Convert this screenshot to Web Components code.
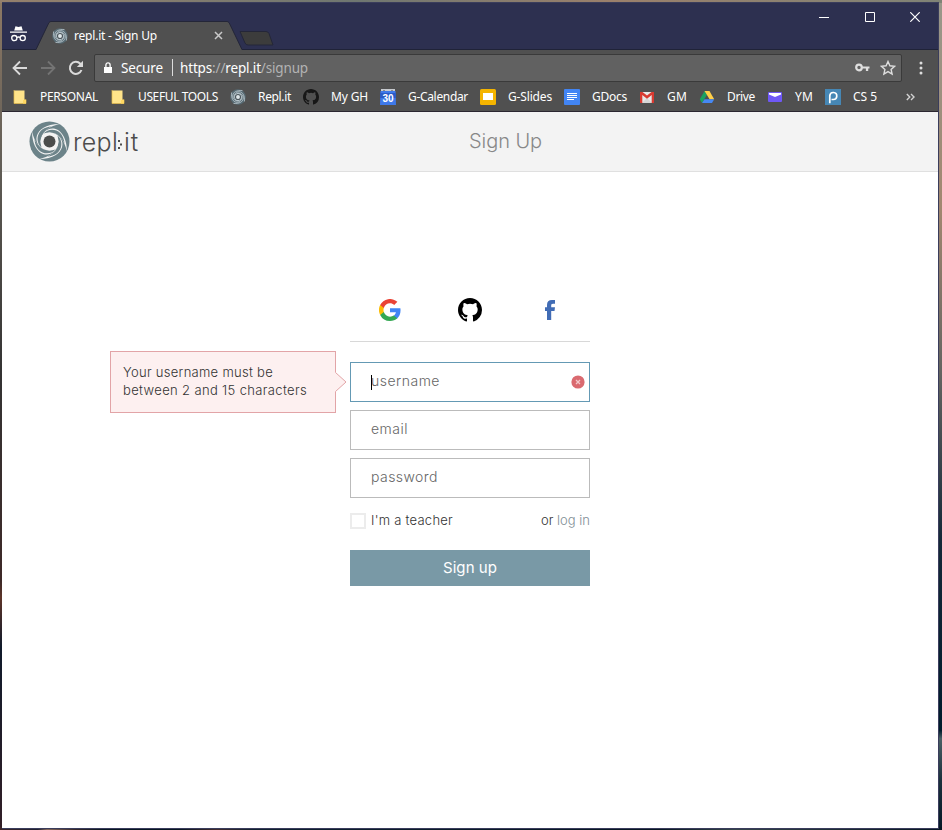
<!DOCTYPE html>
<html lang="en"><head><meta charset="utf-8"><title>repl.it - Sign Up</title>
<style>
html,body{margin:0;height:100%}
body{width:942px;height:830px;overflow:hidden}
</style></head><body>
<desktop-shell></desktop-shell>
<script>
const define=(name,render,after)=>customElements.define(name,class extends HTMLElement{
  connectedCallback(){
    if(this.shadowRoot)return;
    this.attachShadow({mode:'open'}).innerHTML=render(this);
    if(after)after(this);
  }
});

// Text run that spreads its letters to fill a given width.
define('fit-text',e=>`<style>:host{display:block;white-space:pre;width:${e.getAttribute('w')}px;flex:none}span{display:inline-block}</style><span><slot></slot></span>`,e=>{
  const s=e.shadowRoot.querySelector('span');
  const n=e.textContent.length;
  s.style.letterSpacing=((+e.getAttribute('w')-s.getBoundingClientRect().width)/n).toFixed(3)+'px';
});

// Round eye with four tapered blades turning around it.
const swirl=(ring,disc,eye,lw)=>`<svg viewBox="-20.5 -20.5 41 41"><circle r="20" fill="${disc}"/><circle r="9" fill="${ring}"/>
${[0,90,180,270].map(a=>`<path transform="rotate(${a})" d="M-8.500 -3C-5 -18 17 -18 17.500 10C13 -9 2 -13.500 -8.500 -3z" fill="${ring}"/><path transform="rotate(${a})" d="M-6 -8C0 -15 14 -13 15 2C11 -6 5 -11 -6 -8z" fill="${disc}" transform-origin="0 0"/>`).join('')}
<circle r="9" fill="${ring}"/><circle r="6" fill="${eye}"/></svg>`;
const thinSwirl=(ring,disc,eye,lw)=>`<svg viewBox="-20.5 -20.5 41 41"><circle r="20" fill="${disc}"/><circle r="9.500" fill="${ring}"/>
${[0,90,180,270].map(a=>`<path transform="rotate(${a})" d="M-9.800 2C-11.500 -7 -4 -14.500 4 -13.500C13 -12 17.500 -3 16.500 11.500" fill="none" stroke="${ring}" stroke-width="${lw}"/>`).join('')}
<circle r="8" fill="${eye}"/><circle r="5" fill="#dfe7ea"/></svg>`;
const cat=c=>`<svg viewBox="0 0 16 16"><path fill="${c}" d="M8 0C3.580 0 0 3.580 0 8c0 3.540 2.290 6.530 5.470 7.590.4.070.550-.170.550-.380 0-.190-.010-.820-.010-1.490-2.010.370-2.530-.490-2.690-.940-.090-.230-.480-.940-.820-1.130-.280-.150-.680-.520-.010-.530.630-.010 1.080.580 1.230.820.720 1.210 1.870.870 2.330.660.070-.520.280-.870.510-1.070-1.780-.2-3.640-.890-3.640-3.950 0-.870.310-1.590.820-2.150-.080-.2-.360-1.020.080-2.120 0 0 .670-.210 2.200.820a7.600 7.600 0 0 1 4 0c1.530-1.040 2.200-.820 2.200-.820.440 1.100.160 1.920.080 2.120.510.560.820 1.270.820 2.150 0 3.070-1.870 3.750-3.650 3.950.290.250.540.730.540 1.480 0 1.070-.010 1.930-.010 2.200 0 .210.150.460.550.380A8.010 8.010 0 0 0 16 8c0-4.420-3.580-8-8-8z"/></svg>`;
const S=(b,v='0 0 16 16')=>`<svg viewBox="${v}">${b}</svg>`;
const icons={
  logo:swirl('#f3f3f3','#6c8389','#4b4d4c'),
  favicon:thinSwirl('#cfdae0','#566972','#4b565c',1.7),
  incog:S('<path fill="#fff" d="M5.500.8 8.500 1.500 11.500.8 12.800 5H4.200zM0 6h17v1.300H0z"/><g fill="none" stroke="#fff" stroke-width="1.300"><circle cx="4.300" cy="12.600" r="2.600"/><circle cx="12.700" cy="12.600" r="2.600"/><path d="M7 12q1.500-1 3 0"/></g>','0 0 17 16'),
  folder:S('<path d="M2 1.500h10.500v9l1.500 1V14.500H2z" fill="#ffe48a"/><path d="M2 1v13.500h12v-4h-1.500" fill="none" stroke="#e5bc49" stroke-width=".7"/><path d="M11 11h3v3.500h-3z" fill="#ffd862"/>'),
  cat:cat('#171717'),
  catBlack:cat('#000'),
  cal:S('<path fill="#3e79ea" d="M.5 2h15L16 16H0z"/><path fill="#2b5cc6" d="M0 4h16v5H0z"/><path fill="#c6c9ce" d="M1 0h14v2H1z"/><path fill="#888" d="M3 1h2v1H3zM11 1h2v1h-2z"/><text x="8" y="12.800" text-anchor="middle" font-family="Liberation Sans,sans-serif" font-weight="bold" font-size="10" fill="#fff">30</text>'),
  slides:S('<rect width="16" height="16" rx="1.500" fill="#f4b400"/><path fill="#fff" d="M3 4h10v7H3z"/>'),
  docs:S('<rect width="16" height="16" rx="1" fill="#4285f4"/><path stroke="#fff" stroke-width="1" d="M3 4.500h10M3 6.500h10M3 8.500h10M3 10.500h7"/>'),
  gm:S('<path fill="#e9e9e9" d="M1 3h14v11H1z"/><path fill="#d6d6d6" d="m3 14 5-5 5 5z"/><path fill="#d83a31" d="M1 3h2.500L8 6.500 12.500 3H15v11h-2.300V6L8 9.700 3.300 6v8H1z"/>'),
  drive:S('<path fill="#1ba261" d="M5.500 2 .8 10.200 3 14 8 5.800z"/><path fill="#ffcf48" d="M5.500 2h5l4.700 8.200h-4.600z"/><path fill="#4688f4" d="M5.500 10.200h9.700L13 14H3z"/>'),
  ym:S('<rect x="1" y="3" width="14" height="10" rx="1" fill="#6f58f6"/><path fill="#fff" d="M2 4h12v1.500L8 8 2 5.500z"/>'),
  p:S('<path fill="#4687b5" d="M0 0h16v16H0z"/><path fill="none" stroke="#fff" stroke-width="1.700" d="M4.800 14.300V6.600a3.500 3.500 0 1 1 3.400 3.900H6.500"/>'),
  google:S('<path fill="#4285f4" d="M47 24.500c0-1.700-.2-3.200-.4-4.500H24v9.100h12.900c-.5 3-2.200 5.500-4.800 7.200v6h7.700C44.400 38.100 47 31.900 47 24.500z"/><path fill="#34a853" d="M24 48c6.500 0 11.900-2.100 15.900-5.800l-7.700-6c-2.200 1.400-4.900 2.300-8.200 2.300-6.300 0-11.600-4.200-13.500-10H2.500v6.200A24 24 0 0 0 24 48z"/><path fill="#fbbc05" d="M10.500 28.500a14.500 14.500 0 0 1 0-9.100v-6.200h-8a24 24 0 0 0 0 21.500z"/><path fill="#ea4335" d="M24 9.500c3.500 0 6.700 1.200 9.200 3.600l6.900-6.900A24 24 0 0 0 2.500 13.200l8 6.200C12.400 13.700 17.700 9.500 24 9.500z"/>','0 0 48 48'),
  fb:S('<path fill="#416cb5" d="M2 20v-9H0V7.300h2V5C2 1.600 3.600 0 7 0h3v3.700H8C6.500 3.700 6.200 4.400 6.200 5.500v1.800H10L9.500 11H6.200v9z"/>','0 0 10 20'),
  back:S('<path d="M15 8H2M8 1.500 1.500 8 8 14.500" fill="none" stroke="#dadada" stroke-width="1.800"/>'),
  fwd:S('<path d="M1 8h13M8 1.500 14.500 8 8 14.500" fill="none" stroke="#747474" stroke-width="1.800"/>'),
  reload:S('<path d="M13.500 10A6 6 0 1 1 12.300 3.800L14 5.500" fill="none" stroke="#dadada" stroke-width="2"/><path fill="#dadada" d="M15 .8V7H8.800z"/>'),
  lock:S('<path fill="#fff" d="M1 5h8v6H1z"/><path fill="none" stroke="#fff" stroke-width="1.300" d="M2.900 5V3a2.100 2.100 0 0 1 4.200 0v2"/>','0 0 10 12'),
  key:S('<circle cx="4" cy="4.500" r="2.800" fill="none" stroke="#dedede" stroke-width="2.200"/><path fill="#dedede" d="M7 3.400h7.500v2.200h-1.300V8h-2.300V5.600H7z"/>','0 0 15 9'),
  star:S('<path d="m8 1.500 1.900 4.300 4.700.5-3.500 3.100 1 4.600L8 11.600 3.900 14l1-4.600-3.500-3.100 4.700-.5z" fill="none" stroke="#dedede" stroke-width="1.400"/>'),
  dots:S('<g fill="#dedede"><circle cx="2" cy="2" r="1.500"/><circle cx="2" cy="7" r="1.500"/><circle cx="2" cy="12" r="1.500"/></g>','0 0 4 14'),
  tabx:S('<path d="m1 1 7 7M8 1 1 8" stroke="#c9c9c9" stroke-width="1.500"/>','0 0 9 9'),
  min:S('<path d="M0 5.500h10" stroke="#fff"/>','0 0 10 10'),
  max:S('<path d="M.5.5h9v9h-9z" stroke="#fff" fill="none"/>','0 0 10 10'),
  close:S('<path d="m.3.3 9.400 9.400M9.700.3.3 9.700" stroke="#fff" stroke-width="1.200"/>','0 0 10 10'),
  more:S('<path d="m.8.8 3 3-3 3M5 .8l3 3-3 3" fill="none" stroke="#d2d2d2" stroke-width="1.400"/>','0 0 9 7.600'),
  error:S('<circle cx="7" cy="7" r="6.600" fill="#da6a70"/><path d="m5 5 4 4M9 5 5 9" stroke="#f4c9cb" stroke-width="1.300"/>','0 0 14 14')
};
define('ui-icon',e=>`<style>:host{display:block;flex:none;width:${e.getAttribute('w')||16}px;height:${e.getAttribute('h')||16}px}svg{display:block;width:100%;height:100%}</style>${icons[e.getAttribute('name')]}`);

define('title-bar',()=>`<style>
:host{display:flex;height:47px;background:#2d3050;border-bottom:1px solid #202338;box-sizing:border-box;align-items:flex-start}
.inc{margin:22px 0 0 8px}
.tab{position:relative;margin:18px 0 -1px 9px;width:206px;height:29px;display:flex;align-items:center}
.tab>*{position:relative}.tab>.shape{position:absolute;inset:0}
.fav{margin-left:16px}fit-text{margin-left:6px;color:#fff;font-size:12px}
.x{margin-left:57px}
.new{margin:23px 0 0 -3px}
.ctl{margin:9px 18px 0 auto;display:flex;gap:36px}.ctl :last-child{margin-left:-1px}
</style><ui-icon class="inc" name="incog" w="17" h="17"></ui-icon>
<div class="tab"><svg class="shape" width="206" height="29"><path d="M0 29 13 1.500Q14 .5 15 .5H191Q192 .5 193 1.500L206 29z" fill="#505050"/><path d="M0 28.500 13 1.500Q14 .5 15 .5H191Q192 .5 193 1.500L206 28.500" fill="none" stroke="#242638"/></svg>
<ui-icon class="fav" name="favicon"></ui-icon><fit-text w="83">repl.it - Sign Up</fit-text><ui-icon class="x" name="tabx" w="9" h="9"></ui-icon></div>
<svg class="new" width="36" height="20"><path d="M1 5.500H27Q29 5.500 30 7.500L34 19H9Q7 19 6 17z" fill="#3c3c3c" stroke="#242638"/></svg>
<div class="ctl"><ui-icon name="min" w="10" h="10"></ui-icon><ui-icon name="max" w="10" h="10"></ui-icon><ui-icon name="close" w="10" h="10"></ui-icon></div>`);

define('address-bar',()=>`<style>
:host{display:flex;height:35px;align-items:center;background:#505050;color:#fff;font-size:13.500px;padding:0 15px 0 10px;box-sizing:border-box}
.f,.r{margin-left:12px}
.box{margin-left:10px;width:808px;height:28px;box-sizing:border-box;border:1px solid #3a3a3a;border-radius:2px;background:#616161;display:flex;align-items:center;padding:0 5px 0 8px}
.sec{margin-left:8px}.bar{width:1px;height:17px;background:#ddd;margin:0 7px 0 9px}
.end{margin-left:auto;display:flex;align-items:center;gap:10px}i{font-style:normal;color:#b3b3b3}
.dots{margin-left:auto}
</style><ui-icon name="back"></ui-icon><ui-icon class="f" name="fwd"></ui-icon><ui-icon class="r" name="reload"></ui-icon>
<div class="box"><ui-icon name="lock" w="10" h="12"></ui-icon><fit-text class="sec" w="42">Secure</fit-text><span class="bar"></span><fit-text w="128">https<i>://</i>repl.it<i>/signup</i></fit-text>
<div class="end"><ui-icon name="key" w="15" h="9"></ui-icon><ui-icon name="star"></ui-icon></div></div><ui-icon class="dots" name="dots" w="4" h="14"></ui-icon>`);

define('bookmark-item',e=>`<style>:host{display:flex;align-items:center;gap:12px;flex:none}</style><ui-icon name="${e.getAttribute('icon')}"></ui-icon><fit-text w="${e.getAttribute('w')}">${e.getAttribute('label')}</fit-text>`);
define('bookmark-bar',()=>`<style>:host{display:flex;height:27px;box-sizing:border-box;background:#505050;border-bottom:1px solid #2b2630;align-items:center;gap:12px;padding:0 23px 3px 10px;color:#fff;font-size:12px}.m{margin-left:auto}</style>
${[['folder','PERSONAL',58],['folder','USEFUL TOOLS',80],['favicon','Repl.it',33],['cat','My GH',37],['cal','G-Calendar',60],['slides','G-Slides',44],['docs','GDocs',35],['gm','GM',20],['drive','Drive',28],['ym','YM',18],['p','CS 5',24]].map(b=>`<bookmark-item icon="${b[0]}" label="${b[1]}" w="${b[2]}"></bookmark-item>`).join('')}
<ui-icon class="m" name="more" w="9" h="8"></ui-icon>`);

define('site-header',()=>`<style>:host{display:grid;grid-template-columns:467px auto;align-items:center;height:60px;box-sizing:border-box;background:#f3f3f3;border-bottom:1px solid #e0e0e0}
.brand{display:flex;align-items:center;gap:3px;padding-left:27px;color:#4c4c4c;font:300 25px Inter,sans-serif}
.word{display:flex;align-items:center}
.title{font:300 20px/24px Inter,sans-serif;color:#888;padding-bottom:2px}
</style><div class="brand"><ui-icon name="logo" w="41" h="41"></ui-icon><div class="word"><fit-text w="45">repl</fit-text><svg width="6" height="12" style="margin-top:9px"><path fill="#4c4c4c" d="M0 0h2v2H0zM2 3.500h2v2H2zM0 7h2v2H0z"/></svg><fit-text w="15">it</fit-text></div></div>
<fit-text class="title" w="73">Sign Up</fit-text>`);

define('text-field',e=>`<style>:host{display:flex;align-items:center;justify-content:space-between;box-sizing:border-box;height:40px;border:1px solid ${e.hasAttribute('active')?'#6499b4':'#bbb'};background:#fff;padding:0 4px 2px 20px;color:#666;font-size:14px;position:relative}
fit-text{padding-bottom:2px}
.caret{position:absolute;left:20px;top:12px;width:1px;height:15px;background:#000}ui-icon{margin-top:2px}</style>
<fit-text w="${e.getAttribute('w')}">${e.getAttribute('label')}</fit-text>${e.hasAttribute('active')?'<span class="caret"></span><ui-icon name="error" w="14" h="14"></ui-icon>':''}<slot></slot>`);

define('error-bubble',()=>`<style>:host{position:absolute;right:253px;top:-12px;width:226px;height:62px;box-sizing:border-box;border:1px solid #e2a4a7;background:#fdf0f0;padding:11px 12px;color:#333;font-size:13px;line-height:18px}
svg{position:absolute;right:-12px;top:20px}</style><fit-text w="150">Your username must be</fit-text><fit-text w="184">between 2 and 15 characters</fit-text>
<svg width="12" height="20"><path d="M0 0 11 10 0 20z" fill="#fdf0f0"/><path d="M.5.5 11 10 .5 19.500" fill="none" stroke="#e2a4a7"/></svg>`);

define('signup-form',()=>`<style>:host{display:block;width:240px;margin:126px auto 0;font-family:Inter,sans-serif;font-weight:300}
.social{display:grid;grid-template-columns:1fr 1fr 1fr;place-items:center;height:24px;padding-bottom:19px;border-bottom:1px solid #d8d8d8}
.fields{display:grid;gap:8px;margin-top:20px}
.row{display:flex;align-items:center;height:16px;margin-top:15px;font-size:13px;color:#333}.row fit-text{padding-bottom:2px}
.check{width:16px;height:16px;box-sizing:border-box;border:2px solid #ececec;margin-right:5px}
.login{margin-left:auto}.login i{font-style:normal;color:#7f8e95}
.btn{display:flex;justify-content:center;align-items:center;height:36px;box-sizing:border-box;padding-bottom:2px;margin-top:21px;background:#7999a6;color:#fff;font-size:15px;font-weight:400}
</style><div class="social"><ui-icon name="google" w="22" h="22"></ui-icon><ui-icon name="catBlack" w="24" h="24"></ui-icon><ui-icon name="fb" w="10" h="20"></ui-icon></div>
<div class="fields"><text-field active label="username" w="69"><error-bubble></error-bubble></text-field><text-field label="email" w="37"></text-field><text-field label="password" w="67"></text-field></div>
<div class="row"><span class="check"></span><fit-text w="82">I'm a teacher</fit-text><fit-text class="login" w="49">or <i>log in</i></fit-text></div>
<div class="btn"><fit-text w="54">Sign up</fit-text></div>`);

define('browser-window',()=>`<style>:host{display:flex;flex-direction:column;width:936px;height:825px;background:#fff;border:1px solid #3a3d5c;border-left:0;font-family:"Noto Sans","Open Sans",sans-serif}</style><title-bar></title-bar><address-bar></address-bar><bookmark-bar></bookmark-bar><site-header></site-header><signup-form></signup-form>`);
define('desktop-shell',()=>`<style>:host{display:block;width:942px;height:830px;box-sizing:border-box;padding:2px 0 0 2px;background:
linear-gradient(90deg,#95806c,#6f7771 38%,#9b806b 65%,#7f8376) top/100% 3px no-repeat,
linear-gradient(90deg,#3d2629 0,#202030 4%,#84675a 5%,#372729 8%,#071522 11%,#071522 19%,#422b2d 23%,#102030 27%,#071522 70%,#354349 78%,#071522) bottom/100% 3px no-repeat,
linear-gradient(#8d7964,#615d56 20%,#343333 45%,#3d2928 70%,#5d3429 72%,#101a2b 78%,#321f27) left/3px 100% no-repeat,
linear-gradient(#98978a,#a28770 25%,#646461 45%,#142838 65%,#001b2c 88%,#4b5f65 89%,#1b303c 94%,#061827) right/4px 100% no-repeat}</style><browser-window></browser-window>`);
</script></body></html>
